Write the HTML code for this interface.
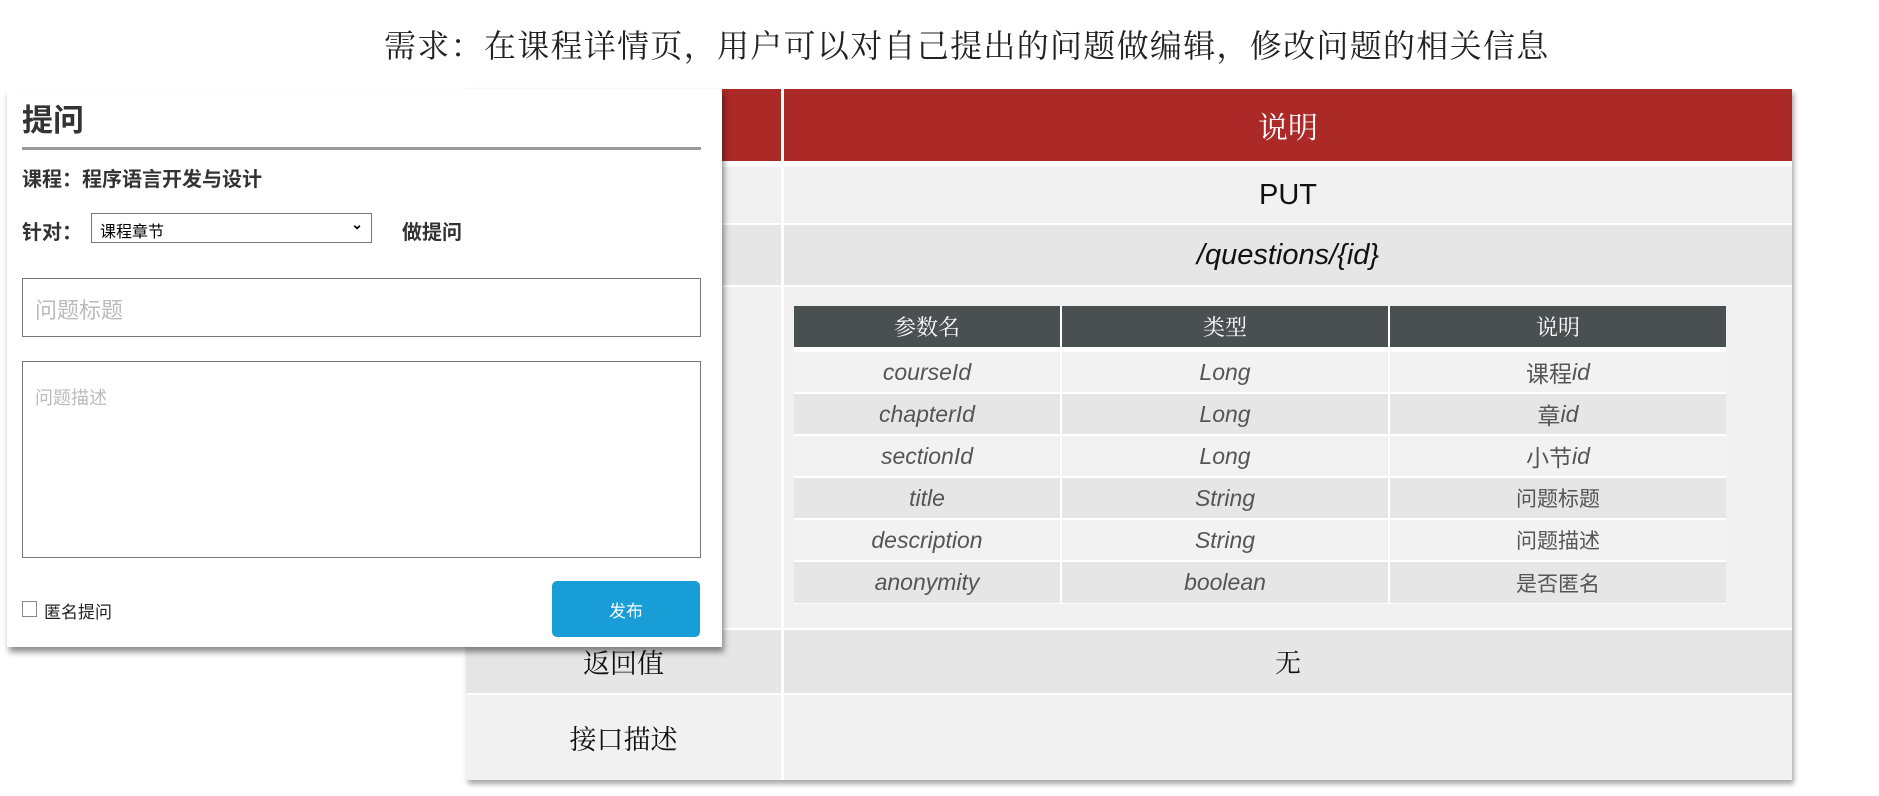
<!DOCTYPE html>
<html><head><meta charset="utf-8"><style>
*{margin:0;padding:0;box-sizing:border-box}
body{width:1879px;height:796px;background:#fff;position:relative;overflow:hidden;font-family:"Liberation Sans","Noto Sans CJK SC",sans-serif}
.a{position:absolute}
.title{left:384px;top:21px;font-family:"Liberation Serif","Noto Serif CJK SC",serif;font-size:32px;color:#222;white-space:nowrap;letter-spacing:1.3px}
.tbl{left:466px;top:89px;width:1326px;height:691px;box-shadow:2px 4px 5px rgba(0,0,0,0.35)}
.cell{position:absolute;display:flex;align-items:center;justify-content:center}
.hw{font-family:"Liberation Sans","Noto Sans CJK SC",sans-serif;font-style:italic}
.lab{font-family:"Liberation Serif","Noto Serif CJK SC",serif;font-size:27px;color:#111}
.it{position:absolute;display:flex;align-items:center;justify-content:center;font-size:23px;color:#555}
.dlg{left:7px;top:89px;width:715px;height:558px;background:#fff;box-shadow:2px 5px 6px rgba(0,0,0,0.45)}
</style></head><body>
<div class="a title">需求：在课程详情页，用户可以对自己提出的问题做编辑，修改问题的相关信息</div>

<div class="a tbl">
  <div class="cell" style="left:0;top:0;width:315px;height:72px;background:#ab2a27"></div>
  <div class="cell" style="left:318px;top:0;width:1008px;height:72px;background:#ab2a27;color:#fff;font-family:'Liberation Serif','Noto Serif CJK SC',serif;font-size:30px">说明</div>
  <div class="cell" style="left:0;top:78px;width:315px;height:56px;background:#f1f1f1"></div>
  <div class="cell hw" style="left:318px;top:78px;width:1008px;height:56px;background:#f1f1f1;font-size:29px;color:#111;font-style:normal">PUT</div>
  <div class="cell" style="left:0;top:136px;width:315px;height:60px;background:#e6e6e6"></div>
  <div class="cell hw" style="left:318px;top:136px;width:1008px;height:60px;background:#e6e6e6;font-size:29px;color:#111">/questions/{id}</div>
  <div class="cell" style="left:0;top:198px;width:315px;height:341px;background:#f1f1f1"></div>
  <div class="cell" style="left:318px;top:198px;width:1008px;height:341px;background:#f1f1f1"></div>
  <div class="cell lab" style="left:0;top:541px;width:315px;height:63px;background:#e6e6e6">返回值</div>
  <div class="cell lab" style="left:318px;top:541px;width:1008px;height:63px;background:#e6e6e6;font-size:26px">无</div>
  <div class="cell lab" style="left:0;top:606px;width:315px;height:85px;background:#f1f1f1">接口描述</div>
  <div class="cell" style="left:318px;top:606px;width:1008px;height:85px;background:#f1f1f1"></div>
</div>

<div class="a" style="left:794px;top:306px;width:932px;height:298px;background:#fff">
  <div class="it" style="left:0;top:0;width:266px;height:41px;background:#4a5050;color:#fff;font-family:'Liberation Serif','Noto Serif CJK SC',serif;font-size:22px">参数名</div>
  <div class="it" style="left:268px;top:0;width:326px;height:41px;background:#4a5050;color:#fff;font-family:'Liberation Serif','Noto Serif CJK SC',serif;font-size:22px">类型</div>
  <div class="it" style="left:596px;top:0;width:336px;height:41px;background:#4a5050;color:#fff;font-family:'Liberation Serif','Noto Serif CJK SC',serif;font-size:22px">说明</div>

  <div class="it hw" style="left:0;top:46px;width:266px;height:40px;background:#f2f2f2">courseId</div>
  <div class="it hw" style="left:268px;top:46px;width:326px;height:40px;background:#f2f2f2">Long</div>
  <div class="it" style="left:596px;top:46px;width:336px;height:40px;background:#f2f2f2">课程<i>id</i></div>

  <div class="it hw" style="left:0;top:88px;width:266px;height:40px;background:#e6e6e6">chapterId</div>
  <div class="it hw" style="left:268px;top:88px;width:326px;height:40px;background:#e6e6e6">Long</div>
  <div class="it" style="left:596px;top:88px;width:336px;height:40px;background:#e6e6e6">章<i>id</i></div>

  <div class="it hw" style="left:0;top:130px;width:266px;height:40px;background:#f2f2f2">sectionId</div>
  <div class="it hw" style="left:268px;top:130px;width:326px;height:40px;background:#f2f2f2">Long</div>
  <div class="it" style="left:596px;top:130px;width:336px;height:40px;background:#f2f2f2">小节<i>id</i></div>

  <div class="it hw" style="left:0;top:172px;width:266px;height:40px;background:#e6e6e6">title</div>
  <div class="it hw" style="left:268px;top:172px;width:326px;height:40px;background:#e6e6e6">String</div>
  <div class="it" style="left:596px;top:172px;width:336px;height:40px;background:#e6e6e6;font-size:21px">问题标题</div>

  <div class="it hw" style="left:0;top:214px;width:266px;height:40px;background:#f2f2f2">description</div>
  <div class="it hw" style="left:268px;top:214px;width:326px;height:40px;background:#f2f2f2">String</div>
  <div class="it" style="left:596px;top:214px;width:336px;height:40px;background:#f2f2f2;font-size:21px">问题描述</div>

  <div class="it hw" style="left:0;top:256px;width:266px;height:41px;background:#e6e6e6">anonymity</div>
  <div class="it hw" style="left:268px;top:256px;width:326px;height:41px;background:#e6e6e6">boolean</div>
  <div class="it" style="left:596px;top:256px;width:336px;height:41px;background:#e6e6e6;font-size:21px">是否匿名</div>
</div>

<div class="a dlg">
  <div class="a" style="left:15px;top:6px;font-size:31px;font-weight:bold;color:#333">提问</div>
  <div class="a" style="left:15px;top:58px;width:679px;height:3px;background:#9a9a9a"></div>
  <div class="a" style="left:15px;top:74px;font-size:20px;font-weight:bold;color:#333">课程：程序语言开发与设计</div>
  <div class="a" style="left:15px;top:127px;font-size:20px;font-weight:bold;color:#333">针对：</div>
  <div class="a" style="left:84px;top:124px;width:281px;height:30px;border:1px solid #777;font-size:16px;color:#000;padding:4px 8px">课程章节<span style="position:absolute;right:8px;top:2px;font-size:14px;font-weight:bold">⌄</span></div>
  <div class="a" style="left:395px;top:127px;font-size:20px;font-weight:bold;color:#333">做提问</div>
  <div class="a" style="left:15px;top:189px;width:679px;height:59px;border:1px solid #777;font-size:22px;color:#bbb;padding:14px 12px">问题标题</div>
  <div class="a" style="left:15px;top:272px;width:679px;height:197px;border:1px solid #777;font-size:18px;color:#bbb;padding:22px 12px">问题描述</div>
  <div class="a" style="left:15px;top:512px;width:15px;height:16px;border:1px solid #888"></div>
  <div class="a" style="left:37px;top:509px;font-size:17px;color:#222">匿名提问</div>
  <div class="a" style="left:545px;top:492px;width:148px;height:56px;background:#189dd6;border-radius:5px;color:#fff;font-size:17px;display:flex;align-items:center;justify-content:center">发布</div>
</div>
</body></html>
